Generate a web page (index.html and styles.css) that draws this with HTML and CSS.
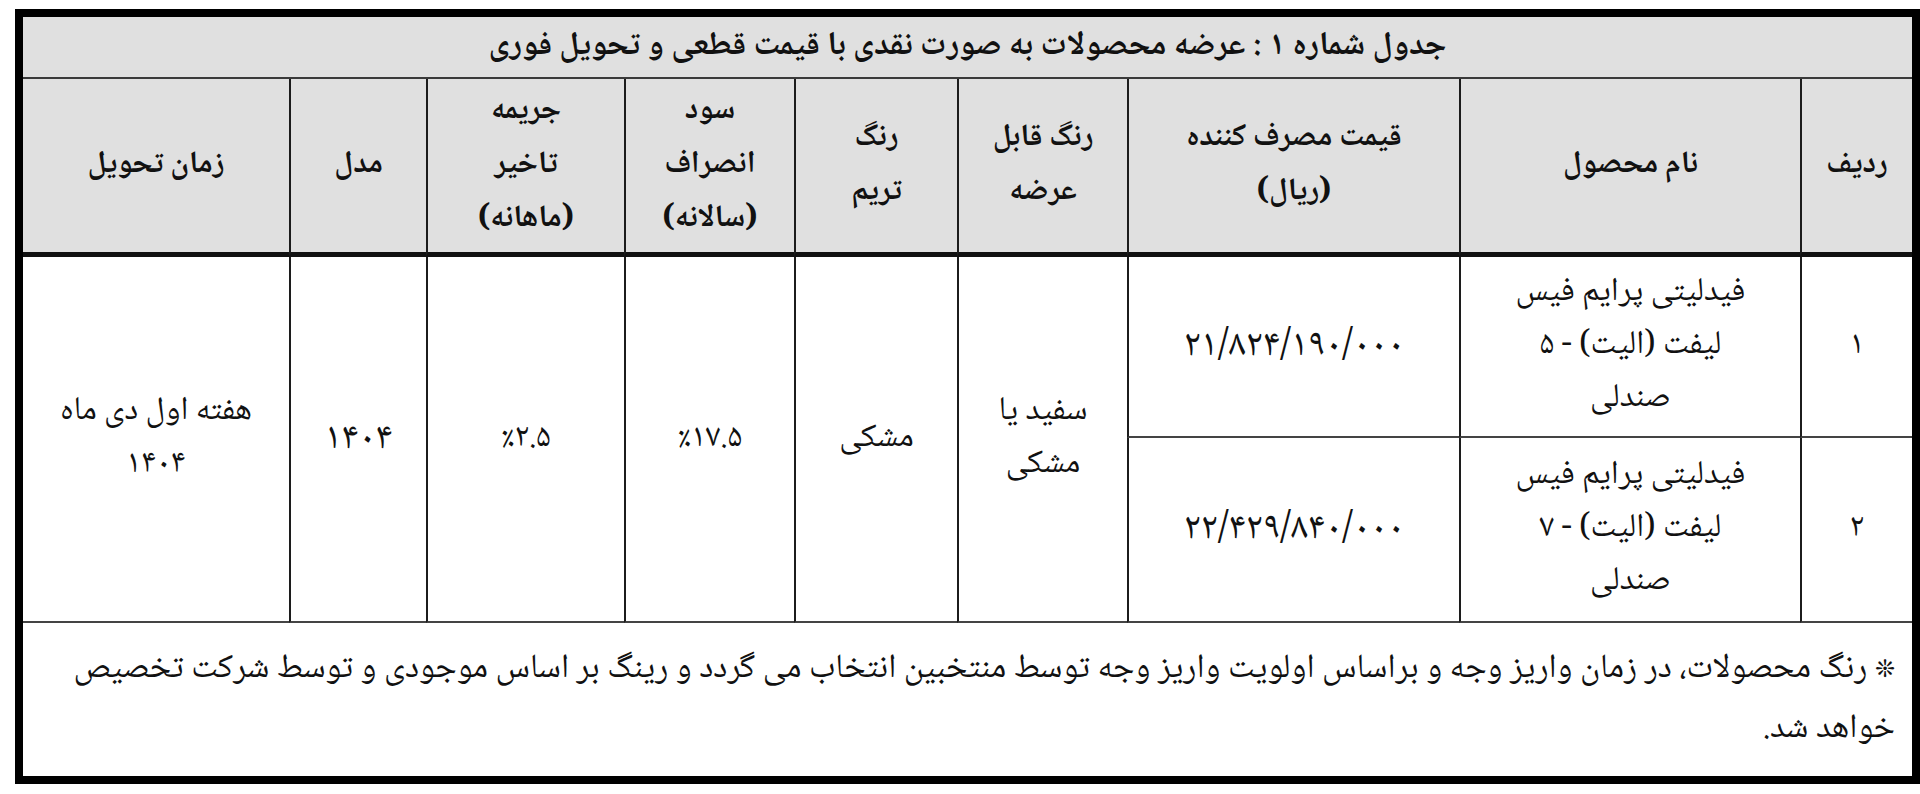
FILE: index.html
```html
<!DOCTYPE html>
<html lang="fa" dir="rtl">
<head>
<meta charset="utf-8">
<title>جدول شماره ۱</title>
<link rel="stylesheet" href="styles.css">
</head>
<body>
<div class="frame">
  <table class="sheet">
    <colgroup>
      <col class="c-radif">
      <col class="c-name">
      <col class="c-price">
      <col class="c-color">
      <col class="c-trim">
      <col class="c-profit">
      <col class="c-fine">
      <col class="c-model">
      <col class="c-time">
    </colgroup>
    <tr class="title-row">
      <th colspan="9" class="title">جدول شماره ۱ : عرضه محصولات به صورت نقدی با قیمت قطعی و تحویل فوری</th>
    </tr>
    <tr class="head-row">
      <th>ردیف</th>
      <th>نام محصول</th>
      <th>قیمت مصرف کننده<br>(ریال)</th>
      <th>رنگ قابل<br>عرضه</th>
      <th>رنگ<br>تریم</th>
      <th>سود<br>انصراف<br>(سالانه)</th>
      <th>جریمه<br>تاخیر<br>(ماهانه)</th>
      <th>مدل</th>
      <th class="last">زمان تحویل</th>
    </tr>
    <tr class="row1">
      <td>۱</td>
      <td>فیدلیتی پرایم فیس<br>لیفت (الیت) - ۵<br>صندلی</td>
      <td class="num">۲۱/۸۲۴/۱۹۰/۰۰۰</td>
      <td rowspan="2" class="span">سفید یا<br>مشکی</td>
      <td rowspan="2" class="span">مشکی</td>
      <td rowspan="2" class="span"><span class="ltr">٪۱۷.۵</span></td>
      <td rowspan="2" class="span"><span class="ltr">٪۲.۵</span></td>
      <td rowspan="2" class="span num">۱۴۰۴</td>
      <td rowspan="2" class="span last">هفته اول دی ماه<br>۱۴۰۴</td>
    </tr>
    <tr class="row2">
      <td>۲</td>
      <td>فیدلیتی پرایم فیس<br>لیفت (الیت) - ۷<br>صندلی</td>
      <td class="num">۲۲/۴۲۹/۸۴۰/۰۰۰</td>
    </tr>
    <tr class="foot-row">
      <td colspan="9" class="note"><span class="star">❊</span> رنگ محصولات، در زمان واریز وجه و براساس اولویت واریز وجه توسط منتخبین انتخاب می گردد و رینگ بر اساس موجودی و توسط شرکت تخصیص<br>خواهد شد.</td>
    </tr>
  </table>
</div>
</body>
</html>
```

FILE: styles.css
```css
html, body {
  margin: 0;
  padding: 0;
  background: #ffffff;
}

body {
  padding: 9px 0 0 8px;
  font-family: "Noto Naskh Arabic", "Noto Sans Arabic", "DejaVu Sans", sans-serif;
  color: #111111;
}

.frame {
  width: 1889px;
  border: 8px solid #000000;
  background: #ffffff;
}

.sheet {
  width: 100%;
  border-spacing: 0;
  table-layout: fixed;
  direction: rtl;
}

.c-radif { width: 112px; }
.c-name { width: 341px; }
.c-price { width: 332px; }
.c-color { width: 170px; }
.c-trim { width: 163px; }
.c-profit { width: 170px; }
.c-fine { width: 198px; }
.c-model { width: 137px; }
.c-time { width: 266px; }

th, td {
  padding: 0;
  text-align: center;
  vertical-align: middle;
  border-left: 2px solid #1c1c1c;
}

th.last, td.last, .title, .note {
  border-left: none;
}

.title-row .title {
  height: 60px;
  background: #e0e0e0;
  border-bottom: 2px solid #3a3a3a;
  font-size: 33px;
  font-weight: bold;
  line-height: 40px;
}

.head-row th {
  height: 173px;
  background: #e0e0e0;
  border-bottom: 5px solid #111111;
  font-size: 31px;
  font-weight: bold;
  line-height: 54px;
}

.row1 td, .row2 td {
  font-size: 33px;
  font-weight: normal;
  line-height: 53px;
  border-bottom: 2px solid #444444;
}

.row1 td.num, .row2 td.num {
  font-size: 38px;
}

.row1 td {
  height: 179px;
}

.row2 td {
  height: 183px;
}

.ltr {
  direction: ltr;
  unicode-bidi: bidi-override;
  display: inline-block;
}

.foot-row .note {
  height: 153px;
  text-align: right;
  padding: 0 17px 0 10px;
  font-size: 34px;
  line-height: 58px;
  white-space: nowrap;
}

.star {
  font-size: 24px;
}
```
